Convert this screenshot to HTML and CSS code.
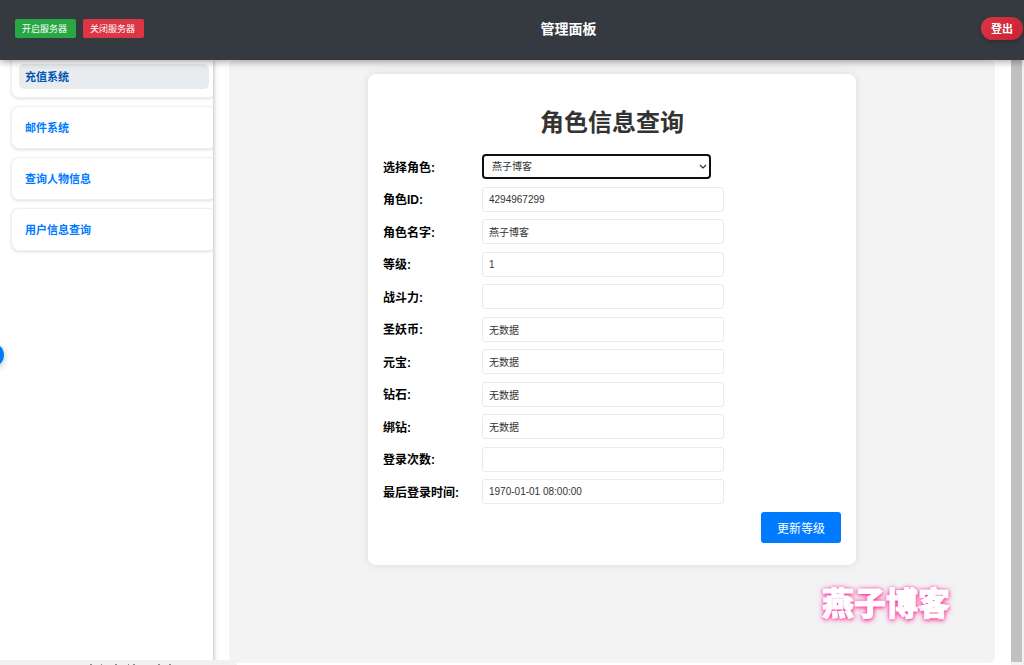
FILE: index.html
```html
<!DOCTYPE html>
<html lang="zh-CN">
<head>
<meta charset="utf-8">
<meta name="viewport" content="width=device-width, initial-scale=1">
<title>管理面板</title>
<link rel="stylesheet" href="styles.css">
</head>
<body>
<header class="topbar">
  <div class="server-actions">
    <button type="button" class="btn-server btn-start">开启服务器</button>
    <button type="button" class="btn-server btn-stop">关闭服务器</button>
  </div>
  <div class="topbar-title">管理面板</div>
  <button type="button" class="btn-logout">登出</button>
</header>
<div class="layout">
  <nav class="sidebar" aria-label="功能菜单">
    <ul class="menu">
      <li class="menu-item"><a class="menu-link active" href="#recharge">充值系统</a></li>
      <li class="menu-item"><a class="menu-link" href="#mail">邮件系统</a></li>
      <li class="menu-item"><a class="menu-link" href="#character">查询人物信息</a></li>
      <li class="menu-item"><a class="menu-link" href="#user">用户信息查询</a></li>
    </ul>
  </nav>
  <main class="content">
    <section class="card">
      <h1 class="card-title">角色信息查询</h1>
      <form class="role-form">
        <div class="fields">
          <div class="field"><label for="role">选择角色:</label><select id="role" class="control role-select"><option>燕子博客</option></select></div>
          <div class="field"><label for="role-id">角色ID:</label><input id="role-id" class="control" type="text" value="4294967299"></div>
          <div class="field"><label for="role-name">角色名字:</label><input id="role-name" class="control" type="text" value="燕子博客"></div>
          <div class="field"><label for="level">等级:</label><input id="level" class="control" type="text" value="1"></div>
          <div class="field"><label for="power">战斗力:</label><input id="power" class="control" type="text"></div>
          <div class="field"><label for="coin">圣妖币:</label><input id="coin" class="control" type="text" value="无数据"></div>
          <div class="field"><label for="ingot">元宝:</label><input id="ingot" class="control" type="text" value="无数据"></div>
          <div class="field"><label for="diamond">钻石:</label><input id="diamond" class="control" type="text" value="无数据"></div>
          <div class="field"><label for="bound">绑钻:</label><input id="bound" class="control" type="text" value="无数据"></div>
          <div class="field"><label for="logins">登录次数:</label><input id="logins" class="control" type="text"></div>
          <div class="field"><label for="last-login">最后登录时间:</label><input id="last-login" class="control" type="text" value="1970-01-01 08:00:00"></div>
        </div>
        <button type="button" class="btn-update">更新等级</button>
      </form>
    </section>
  </main>
  <div class="scroll-track"><div class="scroll-thumb"></div></div>
</div>
<button type="button" class="side-toggle" aria-label="展开菜单"></button>
<div class="status-strip">
  <svg width="90" height="1" viewBox="0 0 90 1" aria-hidden="true"><path d="M3 .5h2M14 .5h1M28 .5h2M41 .5h1M46 .5h2M71 .5h2M82 .5h2" stroke="#8a8a8a"/></svg>
</div>
<div class="watermark">燕子博客</div>
</body>
</html>
```
FILE: styles.css
```css
* { box-sizing: border-box; }

body {
  margin: 0;
  height: 100vh;
  display: flex;
  flex-direction: column;
  overflow: hidden;
  background: #fff;
  font-family: "Liberation Sans", "Noto Sans CJK SC", sans-serif;
  color: #000;
}

button, input, select { font-family: inherit; }

.topbar {
  position: relative;
  z-index: 2;
  flex: none;
  height: 60px;
  padding: 0 1px 4px 15px;
  display: flex;
  justify-content: space-between;
  align-items: center;
  background: #343a40;
  color: #fff;
  box-shadow: 0 2px 7px rgba(0, 0, 0, .35);
}

.server-actions { display: flex; gap: 7px; padding-right: 12px; }

.btn-server {
  height: 19px;
  padding: 1px 9px 0 7px;
  border: 0;
  border-radius: 2px;
  color: #fff;
  font-size: 9px;
  line-height: 18px;
}

.btn-start { background: #28a745; }
.btn-stop { background: #dc3545; }

.topbar-title { font-size: 14px; font-weight: 700; }

.btn-logout {
  height: 23px;
  padding: 0 10px;
  border: 0;
  border-radius: 12px;
  background: linear-gradient(135deg, #dc3545, #c82333);
  color: #fff;
  font-size: 11px;
  font-weight: 700;
  box-shadow: 0 2px 4px rgba(0, 0, 0, .2);
}

.layout { flex: 1; min-height: 0; display: flex; }

.sidebar {
  flex: none;
  width: 213px;
  overflow: hidden;
  box-shadow: 1px 0 4px rgba(0, 0, 0, .25);
}

.menu {
  list-style: none;
  margin: -5px 0 0 11px;
  padding: 0;
  width: 206px;
  display: grid;
  gap: 8px;
}

.menu-item {
  padding: 8px 7px;
  border: 1px solid #f0f0f0;
  border-radius: 8px;
  background: #fff;
  box-shadow: 0 1px 3px rgba(0, 0, 0, .13);
}

.menu-link {
  display: block;
  padding: 1px 6px 0;
  border-radius: 5px;
  color: #007bff;
  font-size: 11px;
  font-weight: 700;
  line-height: 24px;
  text-decoration: none;
}

.menu-link.active { background: #e9ecef; color: #0056b3; }

.content {
  flex: 1;
  margin: 0 16px 2px;
  padding: 14px;
  border-radius: 6px;
  background: #f3f3f3;
}

.card {
  max-width: 488px;
  margin: 0 auto;
  padding: 30px 15px 22px;
  border-radius: 8px;
  background: #fff;
  box-shadow: 0 0 8px rgba(0, 0, 0, .1);
}

.card-title {
  margin: 0 0 12px;
  color: #333;
  font-size: 24px;
  line-height: 38px;
  text-align: center;
}

.role-form { display: flex; flex-direction: column; gap: 8px; }

.fields {
  min-height: 350px;
  display: flex;
  flex-direction: column;
  justify-content: space-between;
}

.field {
  display: grid;
  grid-template-columns: 99px 242px;
  align-items: center;
}

.field label {
  padding-top: 2px;
  font-size: 12px;
  font-weight: 700;
  line-height: 18px;
}

.control {
  width: 100%;
  height: 25px;
  padding: 0 6px;
  border: 1px solid #eaeaea;
  border-radius: 3px;
  background: #fff;
  color: #333;
  font-size: 10px;
}

.role-select {
  width: 229px;
  padding: 0 0 0 8px;
  border: 2px solid #101010;
  border-radius: 4px;
  appearance: none;
  background: #fff url("data:image/svg+xml,%3Csvg xmlns='http://www.w3.org/2000/svg' width='8' height='6' viewBox='0 0 8 6'%3E%3Cpath d='M1 1l3 3 3-3' fill='none' stroke='%23333' stroke-width='1.2'/%3E%3C/svg%3E") no-repeat right 2px center;
}

.btn-update {
  align-self: flex-end;
  height: 31px;
  padding: 0 16px 1px;
  border: 0;
  border-radius: 3px;
  background: #007bff;
  color: #fff;
  font-size: 12px;
}

.scroll-track {
  flex: none;
  width: 13px;
  padding: 0 2px 3px 0;
  background: #f1f1f1;
}

.scroll-thumb { height: 100%; background: #c1c1c1; }

.side-toggle {
  position: absolute;
  left: -20px;
  top: 343px;
  width: 24px;
  height: 24px;
  padding: 0;
  border: 0;
  border-radius: 50%;
  background: #007bff;
  box-shadow: 0 2px 6px rgba(0, 0, 0, .25);
}

.status-strip {
  position: absolute;
  z-index: 3;
  left: 0;
  bottom: 0;
  width: 237px;
  height: 5px;
  padding-left: 87px;
  display: flex;
  align-items: flex-end;
  background: #f1f1f1;
}

.watermark {
  position: absolute;
  right: 74px;
  bottom: 41px;
  color: #fff;
  font-family: "Noto Sans CJK SC", sans-serif;
  font-size: 32px;
  font-weight: 900;
  line-height: 46px;
  -webkit-text-stroke: 1px #fff;
  text-shadow: 0 0 2px #ff1f8f, 0 1px 4px #ff1f8f, 0 1px 6px #ff5fae;
}
```
